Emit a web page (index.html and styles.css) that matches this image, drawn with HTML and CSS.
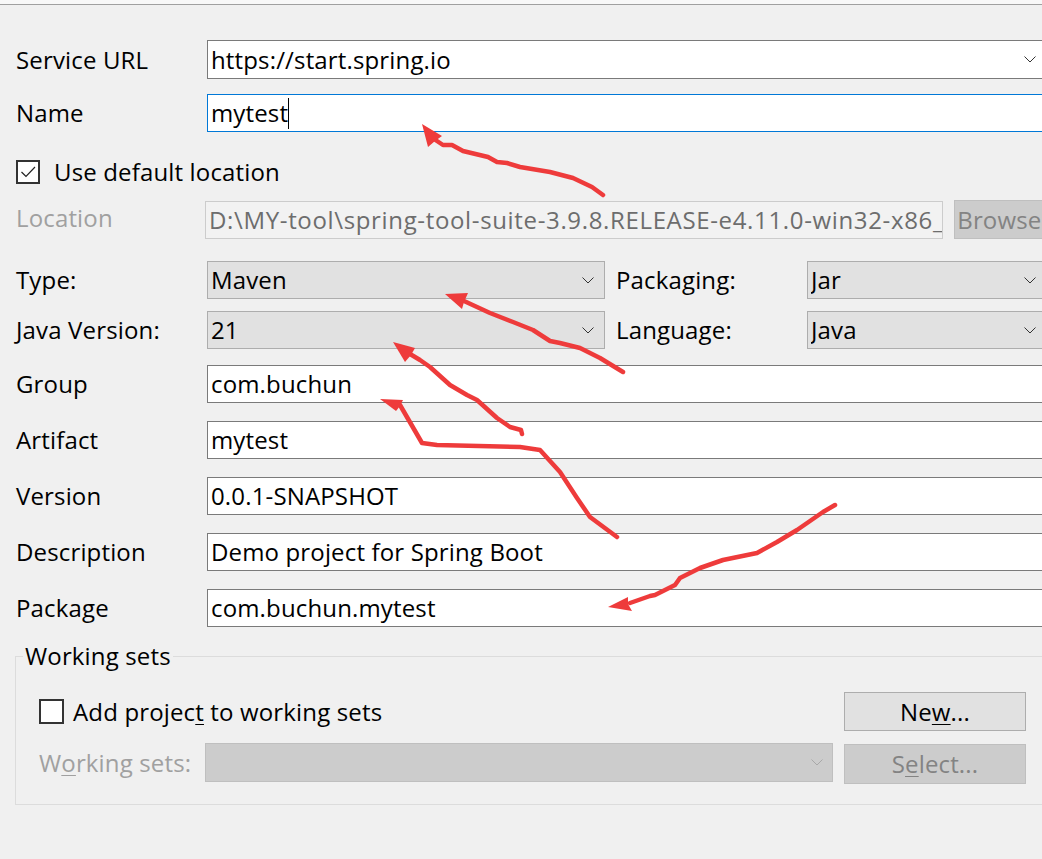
FILE: index.html
```html
<!DOCTYPE html>
<html>
<head>
<meta charset="utf-8">
<link rel="stylesheet" href="styles.css">
</head>
<body>
<div class="topstrip"></div>
<div class="page">
  <div class="row r-service">
    <div class="label">Service URL</div>
    <div class="field combo-edit"><span class="val">https://start.spring.io</span>
      <svg class="chev" width="12" height="7" viewBox="0 0 12 7"><polyline points="0.5,0.5 6,6 11.5,0.5" fill="none" stroke="#333" stroke-width="1"/></svg>
    </div>
  </div>
  <div class="row r-name">
    <div class="label">Name</div>
    <div class="field text focus"><span class="val">mytest</span><span class="caret"></span></div>
  </div>
  <div class="row r-check">
    <span class="cb checked">
      <svg width="20" height="20" viewBox="0 0 20 20"><polyline points="3.5,10 8,14.5 17,5" fill="none" stroke="#222" stroke-width="1.2"/></svg>
    </span>
    <span class="cb-label">Use default location</span>
  </div>
  <div class="row r-loc">
    <div class="label narrow disabled">Location</div>
    <div class="field loc"><span class="val">D:\MY-tool\spring-tool-suite-3.9.8.RELEASE-e4.11.0-win32-x86_64</span></div>
    <div class="btn btn-disabled browse">Browse...</div>
  </div>
  <div class="row r-type">
    <div class="label">Type:</div>
    <div class="field combo half"><span class="val">Maven</span>
      <svg class="chev" width="12" height="7" viewBox="0 0 12 7"><polyline points="0.5,0.5 6,6 11.5,0.5" fill="none" stroke="#333" stroke-width="1"/></svg>
    </div>
    <div class="label label2">Packaging:</div>
    <div class="field combo rest"><span class="val">Jar</span>
      <svg class="chev" width="12" height="7" viewBox="0 0 12 7"><polyline points="0.5,0.5 6,6 11.5,0.5" fill="none" stroke="#333" stroke-width="1"/></svg>
    </div>
  </div>
  <div class="row r-java">
    <div class="label">Java Version:</div>
    <div class="field combo half"><span class="val">21</span>
      <svg class="chev" width="12" height="7" viewBox="0 0 12 7"><polyline points="0.5,0.5 6,6 11.5,0.5" fill="none" stroke="#333" stroke-width="1"/></svg>
    </div>
    <div class="label label2">Language:</div>
    <div class="field combo rest"><span class="val">Java</span>
      <svg class="chev" width="12" height="7" viewBox="0 0 12 7"><polyline points="0.5,0.5 6,6 11.5,0.5" fill="none" stroke="#333" stroke-width="1"/></svg>
    </div>
  </div>
  <div class="row r-group">
    <div class="label">Group</div>
    <div class="field text"><span class="val">com.buchun</span></div>
  </div>
  <div class="row r-std">
    <div class="label">Artifact</div>
    <div class="field text"><span class="val">mytest</span></div>
  </div>
  <div class="row r-std">
    <div class="label">Version</div>
    <div class="field text"><span class="val">0.0.1-SNAPSHOT</span></div>
  </div>
  <div class="row r-std">
    <div class="label">Description</div>
    <div class="field text"><span class="val">Demo project for Spring Boot</span></div>
  </div>
  <div class="row r-std">
    <div class="label">Package</div>
    <div class="field text"><span class="val">com.buchun.mytest</span></div>
  </div>

  <fieldset class="wsets">
    <legend>Working sets</legend>
    <div class="ws-row1">
      <div class="ws-check">
        <span class="cb"></span>
        <span class="cb-label">Add projec<u>t</u> to working sets</span>
      </div>
      <div class="btn btn-normal">Ne<u>w</u>...</div>
    </div>
    <div class="ws-row2">
      <div class="label ws-label disabled">W<u>o</u>rking sets:</div>
      <div class="field combo-disabled">
        <svg class="chev" width="12" height="7" viewBox="0 0 12 7"><polyline points="0.5,0.5 6,6 11.5,0.5" fill="none" stroke="#a8a8a8" stroke-width="1"/></svg>
      </div>
      <div class="btn btn-disabled select">S<u>e</u>lect...</div>
    </div>
  </fieldset>
</div>

<svg class="annot" width="1042" height="859" viewBox="0 0 1042 859">
  <g fill="none" stroke="#ee3b3b" stroke-width="4.5" stroke-linecap="round" stroke-linejoin="round">
    <polyline points="603,195 592,187 573,178 550,172 520,167 507,163 497,162 488,157 463,151 452,145 443,145 434,139"/>
    <polyline points="623,372 600,358 580,348 560,343 550,341 533,330 513,322 490,313 464,301"/>
    <polyline points="522,434 521,430 510,427 497,418 477,400 467,395 450,385 430,367 420,360 410,354"/>
    <polyline points="617,537 590,517 577,498 560,472 540,450 520,447 437,445 422,443 400,405"/>
    <polyline points="835,505 823,512 797,530 777,542 757,553 723,560 700,568 680,578 675,585 655,595 650,596 630,603"/>
  </g>
  <g fill="#ee3b3b">
    <polygon points="422,124 442,136 435,141 428,147"/>
    <polygon points="445,294 468,293 464,302 462,309"/>
    <polygon points="393,342 415,348 411,355 405,362"/>
    <polygon points="380,399 403,400 400,406 396,411"/>
    <polygon points="608,607 628,597 628,604 632,611"/>
  </g>
</svg>
</body>
</html>
```

FILE: styles.css
```css
html, body {
  margin: 0;
  padding: 0;
  background: #f0f0f0;
  overflow: hidden;
  width: 1042px;
  height: 859px;
}
body {
  position: relative;
  font-family: "Open Sans", "Noto Sans", sans-serif;
  font-size: 24px;
  line-height: 32px;
  letter-spacing: 0.15px;
  color: #000;
}
.topstrip {
  height: 4px;
  background: #f8f8f8;
  border-bottom: 1px solid #a0a0a0;
}
.page {
  padding: 0 13px 0 16px;
  box-sizing: border-box;
  width: 1060px;
}
.row {
  display: flex;
  align-items: center;
}
.label {
  width: 191px;
  flex: none;
  white-space: nowrap;
}
.label.narrow { width: 189px; margin-top: -4px; }
.label2 { margin-left: 11px; }
.disabled { color: #a0a0a0; }
.field {
  box-sizing: border-box;
  height: 38px;
  display: flex;
  align-items: center;
  padding: 0 10px 0 3px;
  white-space: nowrap;
  overflow: hidden;
  flex: 1 1 auto;
  min-width: 0;
}
.field .val { flex: 1 1 auto; overflow: hidden; }
.chev { flex: none; }
.text, .combo-edit {
  background: #fff;
  border: 1px solid #7a7a7a;
}
.text.focus { border-color: #0078d7; }
.combo {
  background: #e1e1e1;
  border: 1px solid #adadad;
}
.combo.half { flex: 0 0 398px; }
.loc {
  flex: 0 0 738px;
  background: #f2f2f2;
  border: 1px solid #cccccc;
  color: #6d6d6d;
  padding-right: 0;
}
.loc .val { letter-spacing: 0.65px; overflow: hidden; text-overflow: clip; }
.caret {
  display: inline-block;
  width: 0;
  height: 31px;
  border-left: 1px solid #000;
}
.field.focus .val { flex: none; }

.r-service { margin-top: 35px; }
.r-service .field { height: 39px; }
.r-name { margin-top: 15px; }
.r-check { margin-top: 21px; height: 38px; }
.r-loc { margin-top: 9px; }
.r-type { margin-top: 22px; }
.r-java { margin-top: 12px; }
.r-group { margin-top: 16px; }
.r-std { margin-top: 18px; }

.cb {
  box-sizing: border-box;
  width: 24px;
  height: 24px;
  border: 2px solid #333;
  background: #fff;
  display: inline-flex;
  align-items: center;
  justify-content: center;
  flex: none;
}
.cb-label { margin-left: 14px; white-space: nowrap; }

.btn {
  box-sizing: border-box;
  height: 39px;
  display: flex;
  align-items: center;
  justify-content: center;
  white-space: nowrap;
  flex: none;
}
.btn-normal {
  width: 182px;
  background: #e1e1e1;
  border: 1px solid #adadad;
}
.btn-disabled {
  background: #cccccc;
  border: 1px solid #bfbfbf;
  color: #838383;
}
.browse {
  width: 110px;
  margin-left: 11px;
  margin-right: -30px;
}
u { text-underline-offset: 3px; text-decoration-thickness: 1px; }

.wsets {
  margin: 17px -3px 0 -1px;
  padding: 24px 23px 20px 7px;
  border: 1px solid #dcdcdc;
  min-width: 0;
}
.wsets legend {
  padding: 0 2px;
  margin-left: 0;
  line-height: 24px;
}
.ws-row1 {
  display: flex;
  justify-content: space-between;
  align-items: center;
  height: 39px;
  margin-left: 16px;
}
.ws-row1 .cb { width: 25px; height: 25px; }
.ws-row1 .cb-label { margin-left: 9px; }
.ws-check { display: flex; align-items: center; }
.ws-row2 {
  display: flex;
  align-items: flex-start;
  margin-top: 12px;
  margin-left: 16px;
}
.ws-label { width: 166px; line-height: 39px; }
.combo-disabled {
  flex: 0 0 628px;
  height: 39px;
  background: #cccccc;
  border: 1px solid #bfbfbf;
  justify-content: flex-end;
  padding-right: 9px;
}
.select {
  width: 182px;
  height: 40px;
  margin-left: 11px;
  margin-top: 1px;
}
.annot {
  position: absolute;
  left: 0;
  top: 0;
  pointer-events: none;
}
```
